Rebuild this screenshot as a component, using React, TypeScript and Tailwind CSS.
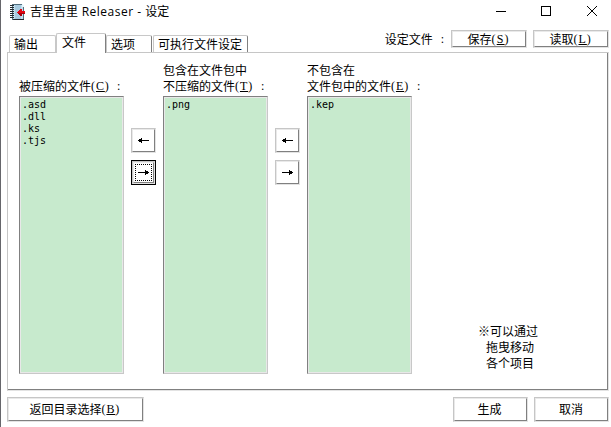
import React from 'react';

const latin = "font-['Liberation_Serif','Noto_Sans_CJK_SC',serif]";

const raised =
  'border border-t-[#c6c6c6] border-l-[#c6c6c6] border-r-[#e3e3e3] border-b-[#e3e3e3] bg-white';
const raisedInner =
  'flex h-full w-full items-center justify-center border border-t-[#e9e9e9] border-l-[#e9e9e9] border-r-[#808080] border-b-[#808080]';

function Key({ k, spacing = 'tracking-[0.9px]' }: { k: string; spacing?: string }) {
  return (
    <span className={`inline-block w-[18px] whitespace-nowrap text-[12px] ${latin} ${spacing}`}>
      (<span className="underline underline-offset-1">{k}</span>)
    </span>
  );
}

function Colon() {
  return <span className={`ml-[8px] ${latin}`}>:</span>;
}

function Button({ size, children }: { size: string; children: React.ReactNode }) {
  return (
    <button className={`block shrink-0 ${raised} ${size}`}>
      <span className={raisedInner}>{children}</span>
    </button>
  );
}

function Arrow({ right = false }: { right?: boolean }) {
  return (
    <svg width="11" height="5" viewBox="0 0 11 5" shapeRendering="crispEdges" className={right ? 'rotate-180' : ''}>
      <path d="M0 2h11v1H0zM1 1h3v1H1zM1 3h3v1H1zM3 0h1v1H3zM3 4h1v1H3z" fill="#000" />
    </svg>
  );
}

function ArrowPair({ focused = false }: { focused?: boolean }) {
  return (
    <div className="flex w-[39px] shrink-0 flex-col gap-[7px] pl-[7px] pt-[66px]">
      <Button size="h-[25px] w-[25px]">
        <Arrow />
      </Button>
      {focused ? (
        <button className="h-[25px] w-[25px] border border-black bg-[#e3e3e3]">
          <span className="flex h-full w-full border border-t-[#c6c6c6] border-l-[#c6c6c6] border-r-[#e3e3e3] border-b-[#e3e3e3]">
            <span className="flex h-full w-full border border-t-[#e9e9e9] border-l-[#e9e9e9] border-r-[#808080] border-b-[#808080] bg-white p-px">
              <span className="flex h-full w-full items-center justify-center border border-dotted border-black">
                <Arrow right />
              </span>
            </span>
          </span>
        </button>
      ) : (
        <Button size="h-[25px] w-[25px]">
          <Arrow right />
        </Button>
      )}
    </div>
  );
}

function FileColumn({
  first,
  second,
  k,
  items,
}: {
  first?: string;
  second: string;
  k: string;
  items: string[];
}) {
  return (
    <div className="w-[105px] shrink-0">
      <div className="flex h-[34px] flex-col whitespace-nowrap leading-[16px]">
        <div className="h-4">{first}</div>
        <div className="flex h-4">
          {second}
          <Key k={k} />
          <Colon />
        </div>
      </div>
      <div className="h-[278px] border border-t-[#808080] border-l-[#808080] border-r-[#c8c8c8] border-b-[#c8c8c8]">
        <ul className="h-full border border-[#e8e8e8] bg-[#c7eacd] pl-px pt-px font-['DejaVu_Sans_Mono',monospace] text-[10px] leading-3">
          {items.map((name) => (
            <li key={name} className="h-3">
              {name}
            </li>
          ))}
        </ul>
      </div>
    </div>
  );
}

function Tab({ label, size, active = false }: { label: string; size: string; active?: boolean }) {
  return (
    <div
      className={`shrink-0 rounded-t-[2px] border-l border-t border-r border-l-[#c8c8c8] border-t-[#c8c8c8] bg-white leading-[16px] whitespace-nowrap ${
        active ? '-mb-px h-[20px]' : 'h-[17px]'
      } ${size}`}
    >
      {label}
    </div>
  );
}

function TitleIcon() {
  return (
    <svg width="16" height="16" viewBox="0 0 16 16" shapeRendering="crispEdges">
      <path d="M2 0h10l2 2v14H2z" fill="#526d7d" />
      <path d="M3 1h9v2h1v12H3z" fill="#c3e0f0" />
      <path d="M5 1h6v14H5z" fill="#a8cbe0" />
      <path d="M12 0h1v1h1v2h-2z" fill="#e8f5fb" />
      <path d="M0 1h4v1H0zM0 3h4v1H0zM0 5h4v1H0zM0 7h4v1H0zM0 9h4v1H0zM0 11h4v1H0zM0 13h4v1H0zM3 15h11v1H3z" fill="#252b30" />
      <path d="M7 8h1V7h1V6h1V5h2v2h3v3h-3v2h-2v-1H9v-1H8V9H7z" fill="#e30613" />
      <path d="M8 9h7v1h-3v2h-2v-1H9v-1H8z" fill="#a8000c" />
    </svg>
  );
}

export default function App() {
  return (
    <div className="flex h-[427px] w-[611px] flex-col overflow-hidden border-l border-[#66666b] bg-white font-['Noto_Sans_CJK_SC',sans-serif] text-[12px] text-black">
      <header className="flex h-6 shrink-0 items-center pl-[9px]">
        <TitleIcon />
        <h1 className="ml-[4px] whitespace-nowrap font-['Open_Sans','Noto_Sans_CJK_SC',sans-serif] text-[12px] leading-6">
          吉里吉里<span className="tracking-[0.5px]"> Releaser - </span>设定
        </h1>
        <svg className="ml-auto mr-[13px]" width="102" height="12" viewBox="0 0 102 12" fill="none" stroke="#000">
          <path d="M0 5.5h10M45.5 0.5h9v9h-9z" shapeRendering="crispEdges" />
          <path d="M91 0l10 10M101 0l-10 10" />
        </svg>
      </header>

      <div className="flex h-[28px] shrink-0 pl-[8px]">
        <div className="flex items-end">
          <Tab label="输出" size="w-[47px] border-r-[#c8c8c8] pl-[4px]" />
          <Tab label="文件" size="w-[50px] z-10 border-r-[#808080] pl-[5px]" active />
          <Tab label="选项" size="w-[46px] border-r-[#808080] pl-[4px]" />
          <Tab label="可执行文件设定" size="ml-px w-[95px] border-r-[#808080] pl-[4px]" />
        </div>
        <div className="ml-auto mr-[2px] flex pt-[6px]">
          <div className="mr-[7px] flex leading-[18px]">
            设定文件
            <Colon />
          </div>
          <Button size="h-[18px] w-[76px]">
            <span className="flex pr-px leading-4">
              保存
              <Key k="S" spacing="tracking-[1.2px]" />
            </span>
          </Button>
          <div className="w-[6px]" />
          <Button size="h-[18px] w-[76px]">
            <span className="flex pr-px leading-4">
              读取
              <Key k="L" spacing="tracking-[1px]" />
            </span>
          </Button>
        </div>
      </div>

      <main className="ml-[6px] h-[339px] w-[602px] shrink-0 border border-t-[#c6c6c6] border-l-[#c6c6c6] border-r-[#e3e3e3] border-b-[#e3e3e3]">
        <div className="flex h-full border-r border-b border-[#808080] pl-[11px] pt-[9px]">
          <FileColumn second="被压缩的文件" k="C" items={['.asd', '.dll', '.ks', '.tjs']} />
          <ArrowPair focused />
          <FileColumn first="包含在文件包中" second="不压缩的文件" k="T" items={['.png']} />
          <ArrowPair />
          <FileColumn first="不包含在" second="文件包中的文件" k="E" items={['.kep']} />
          <p className="ml-[66px] mt-auto mb-[18px] whitespace-nowrap leading-[16px]">
            ※可以通过
            <span className="block pl-2">拖曳移动</span>
            <span className="block pl-2">各个项目</span>
          </p>
        </div>
      </main>

      <footer className="flex pl-[6px] pr-[2px] pt-[6px]">
        <Button size="h-[25px] w-[137px]">
          <span className="flex pr-[2px] pb-px">
            返回目录选择
            <Key k="B" />
          </span>
        </Button>
        <div className="ml-auto flex gap-[6px]">
          <Button size="h-[25px] w-[75px]">
            <span className="pr-[2px] pb-px">生成</span>
          </Button>
          <Button size="h-[25px] w-[75px]">
            <span className="pr-px pb-px">取消</span>
          </Button>
        </div>
      </footer>
    </div>
  );
}
